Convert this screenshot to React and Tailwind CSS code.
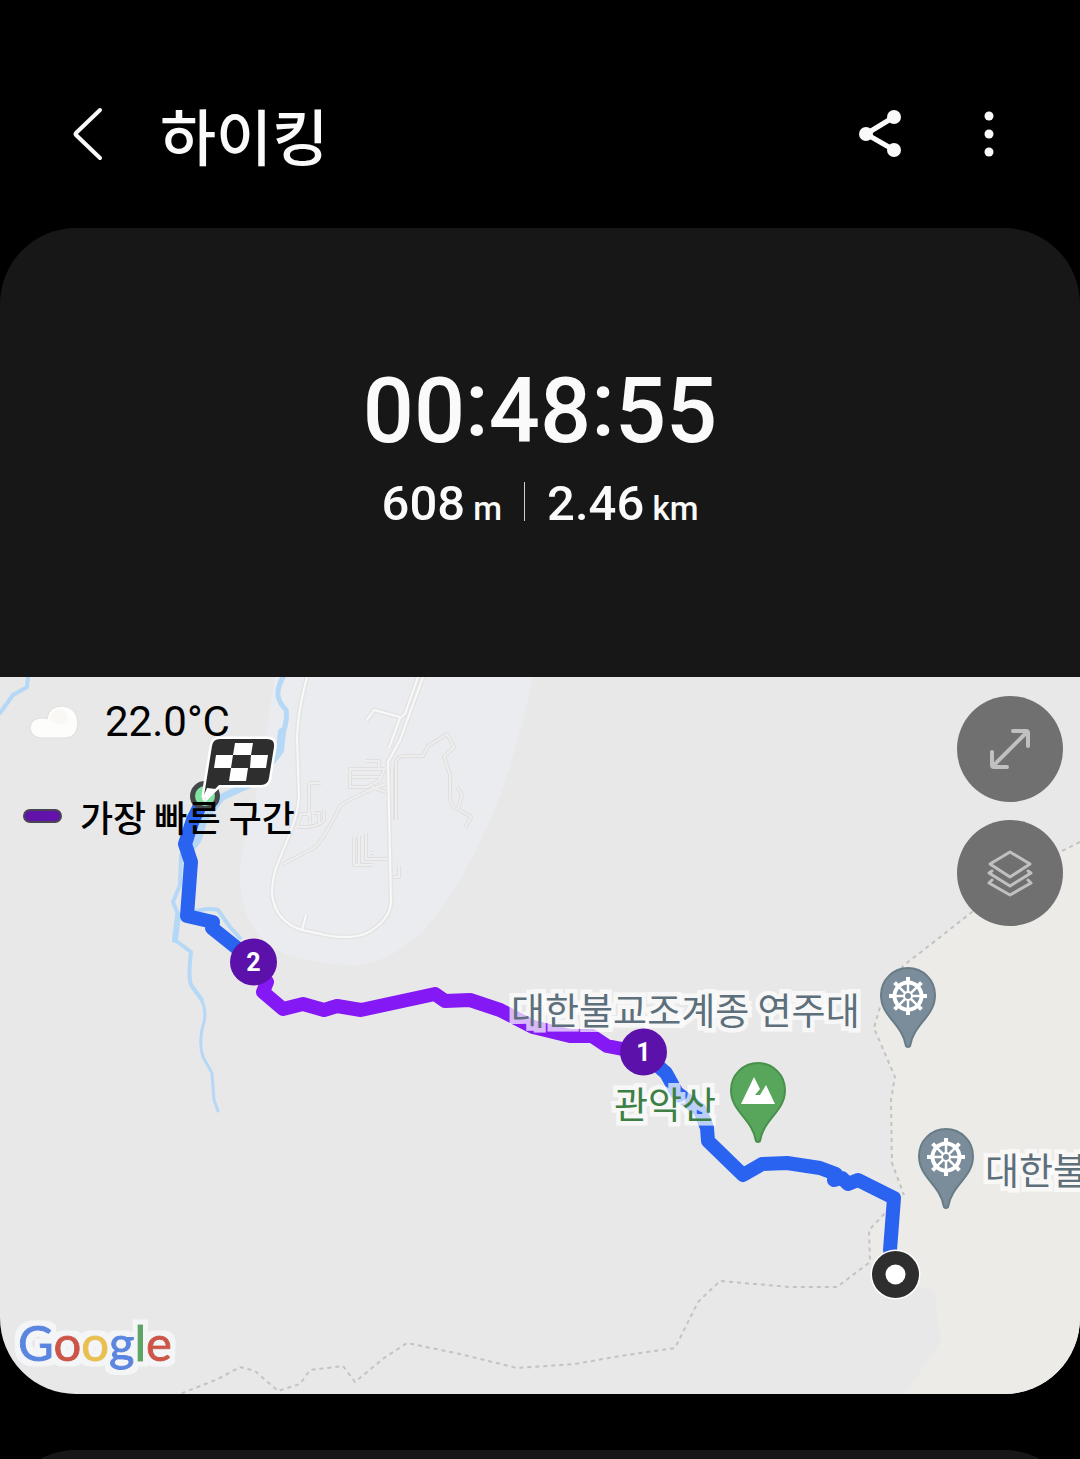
import { useState } from 'react';

const trails = [
    'M1080 842 L1060 852 L972 912 L930 945 L903 966 L880 1007 L874 1028 L895 1077 L891 1100 L892 1163 L904 1195',
    'M890 1208 L869 1230 L870 1262 L837 1287 L790 1287 L720 1281 L698 1302 L675 1348 L620 1356 L575 1364 L517 1368 L460 1354 L407 1343 L384 1358 L355 1382 L343 1366 L310 1370 L300 1384 L278 1391 L255 1371 L240 1367 L218 1379 L180 1394'
];

const roads = [
    'M307 677 Q298 710 297 737 L299 797 Q298 813 290 833 L276 868 Q272 880 272 895 Q276 922 302 930 L330 936 Q355 939 367 933 Q389 921 391 903 L388 762 L400 740 L423 677',
    'M418 677 L405 714 L400 718 L389 748',
    'M366 721 L374 710 L400 717',
    'M306 915 L302 930'
];

const paths = [
    'M283 864 L314 848 Q325 838 340 806 Q350 798 385 784 M354 837 V865 H373 M309 783 V816 M309 783 H321',
    'M297 827 L301 814 H310 V823 M314 813 H319 V824 M324 810 V820 Q318 828 297 827',
    'M385 769 H350 V787 H367 L380 780 L384 770 M352 777 H380 M366 761 H379 V769 M372 787 L386 792',
    'M396 820 V761 Q398 756 405 756 H423 L428 746 L447 734 L454 747 L444 757 L450 775 V797 Q452 809 458 809 L462 795 L457 787 M458 809 L471 817 L465 828',
    'M392 820 V767 M371 853 H374',
    'M359 836 V864 M366 833 V859 H391 M391 877 H399 V866'
];

const places = [
    { id: 'yeonjudae', name: '대한불교조계종 연주대', x: 511, y: 1025, color: '#5c6f7b' },
    { id: 'gwanaksan', name: '관악산', x: 614, y: 1119, color: '#3d8045' },
    { id: 'temple', name: '대한불교조계종', x: 985, y: 1185, color: '#5c6f7b' }
];

const Pin = ({ x, y, fill, edge, children }) => (
    <g transform={`translate(${x} ${y})`}>
        <path
            d="M-2 51 C-6 28 -27 22 -27 0 A27 27 0 0 1 27 0 C27 22 6 28 2 51 Q0 53 -2 51Z"
            fill={fill}
            stroke={edge}
            strokeWidth="2"
        />
        {children}
    </g>
);

const Wheel = () => (
    <g stroke="#fff" fill="none">
        <circle cy="1" r="13.5" strokeWidth="4" />
        <circle cy="1" r="4" strokeWidth="2" />
        {[0, 45, 90, 135, 180, 225, 270, 315].map((deg) => (
            <g key={deg} transform={`translate(0 1) rotate(${deg})`}>
                <path d="M0 -4 V-14" strokeWidth="2.5" />
                <path d="M0 -15 V-19" strokeWidth="4" />
            </g>
        ))}
    </g>
);

const Waypoint = ({ x, y, label }) => (
    <g>
        <circle cx={x} cy={y} r="23.5" fill="#5c12aa" />
        <text x={x} y={y + 9} textAnchor="middle" fill="#fff" className="font-['Roboto',sans-serif] text-[25px] font-bold">
            {label}
        </text>
    </g>
);

const TrackMap = () => (
    <svg viewBox="0 677 1080 717" className="block w-full" role="img" aria-label="하이킹">
        <defs>
            <filter id="halo" x="-10%" y="-20%" width="120%" height="140%">
                <feMorphology in="SourceAlpha" operator="dilate" radius="5" result="spread" />
                <feFlood floodColor="#f4f5f6" />
                <feComposite in2="spread" operator="in" result="edge" />
                <feMerge>
                    <feMergeNode in="edge" />
                    <feMergeNode in="SourceGraphic" />
                </feMerge>
            </filter>
        </defs>

        <rect y="677" width="1080" height="717" fill="#e8e8e8" />
        <path
            d="M1080 842 L1060 852 L972 912 L930 945 L903 966 L880 1007 L874 1028 L895 1077 L891 1100 L892 1163 L904 1195 L869 1230 L870 1262 L895 1280 L922 1287 L935 1292 L937 1317 L941 1341 L905 1394 H1080Z"
            fill="#ecebe7"
        />
        <path
            d="M275 677 L255 803 Q239 850 240 880 Q241 910 257 933 Q272 950 290 956 Q325 966 360 965 Q397 960 430 923 Q466 880 497 803 Q517 750 533 677Z"
            fill="#ebecf0"
        />

        {/* streams */}
        <g fill="none" stroke="#b5d8f6" strokeLinecap="round" strokeLinejoin="round">
            <path d="M28 677 L27 687 L13 695 L0 713" strokeWidth="4" />
            <path d="M283 677 Q277 688 278 696 Q280 704 286 710 Q288 722 281 738" strokeWidth="5" />
            <path d="M282 732 L280 750" strokeWidth="8" />
            <path d="M278 754 L255 782 L222 797 L204 820 L198 840 L186 855" strokeWidth="7" />
            <path d="M181 855 L180 885 L173 902 L179 917" strokeWidth="4" />
            <path d="M178 915 L175 940" strokeWidth="6" />
            <path d="M175 940 L191 952 Q188 975 191 985 L202 1000" strokeWidth="4" />
            <path d="M200 998 Q207 1008 204 1022 Q198 1042 203 1057 L212 1073 L214 1100 L218 1111" strokeWidth="3" />
            <path d="M190 914 Q204 907 218 910 L230 927 L240 938" strokeWidth="4" />
        </g>

        <g fill="none" strokeLinejoin="round">
            {paths.map((d) => <path key={d} d={d} stroke="#dfdfdf" strokeWidth="4" />)}
            {paths.map((d) => <path key={d} d={d} stroke="#eeeeef" strokeWidth="2" />)}
            {roads.map((d) => <path key={d} d={d} stroke="#e4e4e5" strokeWidth="5" />)}
            {roads.map((d) => <path key={d} d={d} stroke="#f9f9f9" strokeWidth="2" />)}
        </g>

        <g fill="none" stroke="#c3c3c2" strokeWidth="2" strokeDasharray="4 4">
            {trails.map((d) => <path key={d} d={d} />)}
        </g>

        {/* recorded track */}
        <g fill="none" strokeWidth="14" strokeLinecap="round" strokeLinejoin="round">
            <path d="M253 962 L267 982 L263 992 L283 1009 L303 1004 L324 1010 L337 1006 L361 1010 L435 994 L445 1001 L470 1000 L500 1010 L533 1027 L570 1036 L592 1036 L607 1046 L643 1053" stroke="#8519f5" />
            <path d="M203 800 L193 820 L185 844 L191 862 L187 916 L213 922 L212 928 L237 948 L253 962" stroke="#2b63f1" />
            <path d="M643 1053 L666 1073 L677 1093 L700 1110 L707 1128 L708 1141 L743 1175 L762 1164 L787 1163 L820 1168 L836 1174 L834 1180 L842 1178 L848 1184 L858 1180 L894 1198 L890 1250" stroke="#2b63f1" />
        </g>

        {/* place names */}
        {places.map((place) => (
            <text
                key={place.id}
                x={place.x}
                y={place.y}
                fill={place.color}
                stroke="#fff"
                strokeOpacity="0.7"
                strokeWidth="9"
                paintOrder="stroke"
                className="font-['Noto_Sans_CJK_KR',sans-serif] text-[37px]"
            >
                {place.name}
            </text>
        ))}

        <Pin x={908} y={995} fill="#7b8d9a" edge="#687c88"><Wheel /></Pin>
        <Pin x={946} y={1156} fill="#7b8d9a" edge="#687c88"><Wheel /></Pin>
        <Pin x={758} y={1090} fill="#57a65b" edge="#48904d">
            <path d="M-17 14 L-4 -13 L2 -1 L-3 5 H2 L8 -5 L17 14Z" fill="#fff" />
        </Pin>

        <Waypoint x={253.5} y={962} label="2" />
        <Waypoint x={643.5} y={1052} label="1" />

        {/* start */}
        <circle cx="895.5" cy="1274.5" r="25" fill="#fff" />
        <circle cx="895.5" cy="1274.5" r="23.5" fill="#2e2e2e" />
        <circle cx="895.5" cy="1274.5" r="10" fill="#fff" />

        {/* finish */}
        <circle cx="205" cy="796" r="12.5" fill="#83e2a0" stroke="#45484b" strokeWidth="5" />
        <path
            d="M220 739 H267 Q275 739 274 747 L269 778 Q268 785 261 785 H219 L205 799 L204 796 L212 746 Q213 739 220 739Z"
            fill="#2e2e2e"
            stroke="#fff"
            strokeWidth="5"
            strokeLinejoin="round"
            paintOrder="stroke"
        />
        <path
            d="M235 743 H253 L251 755 H233Z M216 755 H233 L231 768 H214Z M251 755 H268 L266 768 H250Z M231 768 H248 L246 781 H229Z"
            fill="#fff"
        />
        <path d="M207 788 L203 797 L206 799 L216 789Z" fill="#fff" />

        <text x="18" y="1361" strokeWidth="1" filter="url(#halo)" className="font-['Lato',sans-serif] text-[49px]">
            <tspan fill="#5a86e0" stroke="#5a86e0">G</tspan>
            <tspan fill="#cc5546" stroke="#cc5546">o</tspan>
            <tspan fill="#e9c04f" stroke="#e9c04f">o</tspan>
            <tspan fill="#5a86e0" stroke="#5a86e0">g</tspan>
            <tspan fill="#5ba564" stroke="#5ba564">l</tspan>
            <tspan fill="#cc5546" stroke="#cc5546">e</tspan>
        </text>
    </svg>
);

const Header = () => (
    <header className="flex h-[228px] items-center justify-between px-[56px] pt-[42px] text-[#fafafa]">
        <div className="flex items-center gap-[40px]">
            <button type="button" aria-label="뒤로" className="flex h-16 w-16 items-center justify-center">
                <svg viewBox="0 0 64 64" className="h-16 w-16" fill="none" stroke="currentColor" strokeWidth="4" strokeLinecap="round" strokeLinejoin="round">
                    <path d="M44 7 L20 30 Q19 31 20 32 L44 55" />
                </svg>
            </button>
            <h1 className="font-['Noto_Sans_CJK_KR',sans-serif] text-[61px] leading-[72px] font-medium">하이킹</h1>
        </div>
        <div className="flex items-center gap-[44px]">
            <button type="button" aria-label="공유">
                <svg viewBox="0 0 64 64" className="h-16 w-16" fill="currentColor">
                    <path d="M42 14 L14 31 L42 47" fill="none" stroke="currentColor" strokeWidth="5" />
                    <circle cx="42" cy="14" r="7" />
                    <circle cx="14" cy="31" r="7" />
                    <circle cx="42" cy="47" r="7" />
                </svg>
            </button>
            <button type="button" aria-label="더보기">
                <svg viewBox="0 0 64 64" className="h-16 w-16" fill="currentColor">
                    <circle cx="29" cy="13" r="4.5" />
                    <circle cx="29" cy="31" r="4.5" />
                    <circle cx="29" cy="49" r="4.5" />
                </svg>
            </button>
        </div>
    </header>
);

const Summary = () => (
    <div className="flex h-[449px] flex-col items-center pt-[130px] font-['Roboto','Noto_Sans_CJK_KR',sans-serif] font-medium text-[#fafafa]">
        <p className="text-[90px] leading-[108px]">
            00<span className="align-[7px] leading-none">:</span>48<span className="align-[7px] leading-none">:</span>55
        </p>
        <div className="mt-[8px] flex items-start">
            <p className="text-[49px] leading-[60px]">608 <span className="-ml-1 text-[33px]">m</span></p>
            <span className="mx-[22px] mt-[8px] h-[39px] w-px bg-[#d0d0d0]" />
            <p className="text-[49px] leading-[60px]">2.46 <span className="-ml-1 text-[33px]">km</span></p>
        </div>
    </div>
);

const App = () => {
    const [expanded, setExpanded] = useState(false);
    const [layers, setLayers] = useState(false);

    return (
        <div className="h-screen overflow-hidden bg-black">
            <Header />
            <main>
                <section className="overflow-hidden rounded-[76px] bg-[#171717]">
                    <Summary />
                    <div className="relative">
                        <TrackMap />
                        <div className="absolute inset-x-0 top-0 flex items-start justify-between pt-[19px] pr-[17px] pl-[23px] text-black">
                            <div>
                                <div className="flex items-center gap-[20px]">
                                    <svg viewBox="0 0 62 52" className="h-[52px] w-[62px]" aria-hidden="true">
                                        <path
                                            d="M18 42 Q8 41 7 32 Q8 22 19 22 Q23 22 24 23 Q26 10 39 10 Q54 11 55 27 Q54 41 43 42Z"
                                            fill="#fdfdfc"
                                            stroke="#dedede"
                                            strokeWidth="1"
                                        />
                                        <path d="M26 23 Q29 14 38 13 Q46 17 45 26 Q38 33 26 23Z" fill="#faf8f4" />
                                    </svg>
                                    <span className="font-['Roboto',sans-serif] text-[42px] leading-[52px]">22.0°C</span>
                                </div>
                                <div className="mt-[42px] flex items-center gap-[18px]">
                                    <span className="h-[14px] w-[39px] rounded-full border-2 border-[#4a4453] bg-[#6213a9]" />
                                    <span className="font-['Noto_Sans_CJK_KR',sans-serif] text-[36px] leading-[52px] font-medium">가장 빠른 구간</span>
                                </div>
                            </div>
                            <div className="flex flex-col gap-[18px] text-[#c0c0c0]">
                                <button
                                    type="button"
                                    aria-label="지도 확대"
                                    aria-pressed={expanded}
                                    onClick={() => setExpanded(!expanded)}
                                    className="flex size-[106px] items-center justify-center rounded-full bg-[#707070]"
                                >
                                    <svg viewBox="0 0 48 48" className="size-[48px]" fill="none" stroke="currentColor" strokeWidth="4" strokeLinecap="round" strokeLinejoin="round">
                                        <path d="M27 6 H40 Q42 6 42 8 V21 M41 7 L7 41 M6 27 V40 Q6 42 8 42 H21" />
                                    </svg>
                                </button>
                                <button
                                    type="button"
                                    aria-label="지도 레이어"
                                    aria-pressed={layers}
                                    onClick={() => setLayers(!layers)}
                                    className="flex size-[106px] items-center justify-center rounded-full bg-[#707070]"
                                >
                                    <svg viewBox="0 0 48 48" className="size-[48px]" fill="none" stroke="currentColor" strokeWidth="3" strokeLinecap="round" strokeLinejoin="round">
                                        <path d="M24 3 L44 15 L24 28 L4 15Z" />
                                        <path d="M6 22 L3 24 L24 37 L45 24 L42 22" />
                                        <path d="M6 31 L3 34 L24 46 L45 34 L42 31" />
                                    </svg>
                                </button>
                            </div>
                        </div>
                    </div>
                </section>
                <section className="mt-14 h-[400px] rounded-[76px] bg-[#171717]" />
            </main>
        </div>
    );
};

export default App;
